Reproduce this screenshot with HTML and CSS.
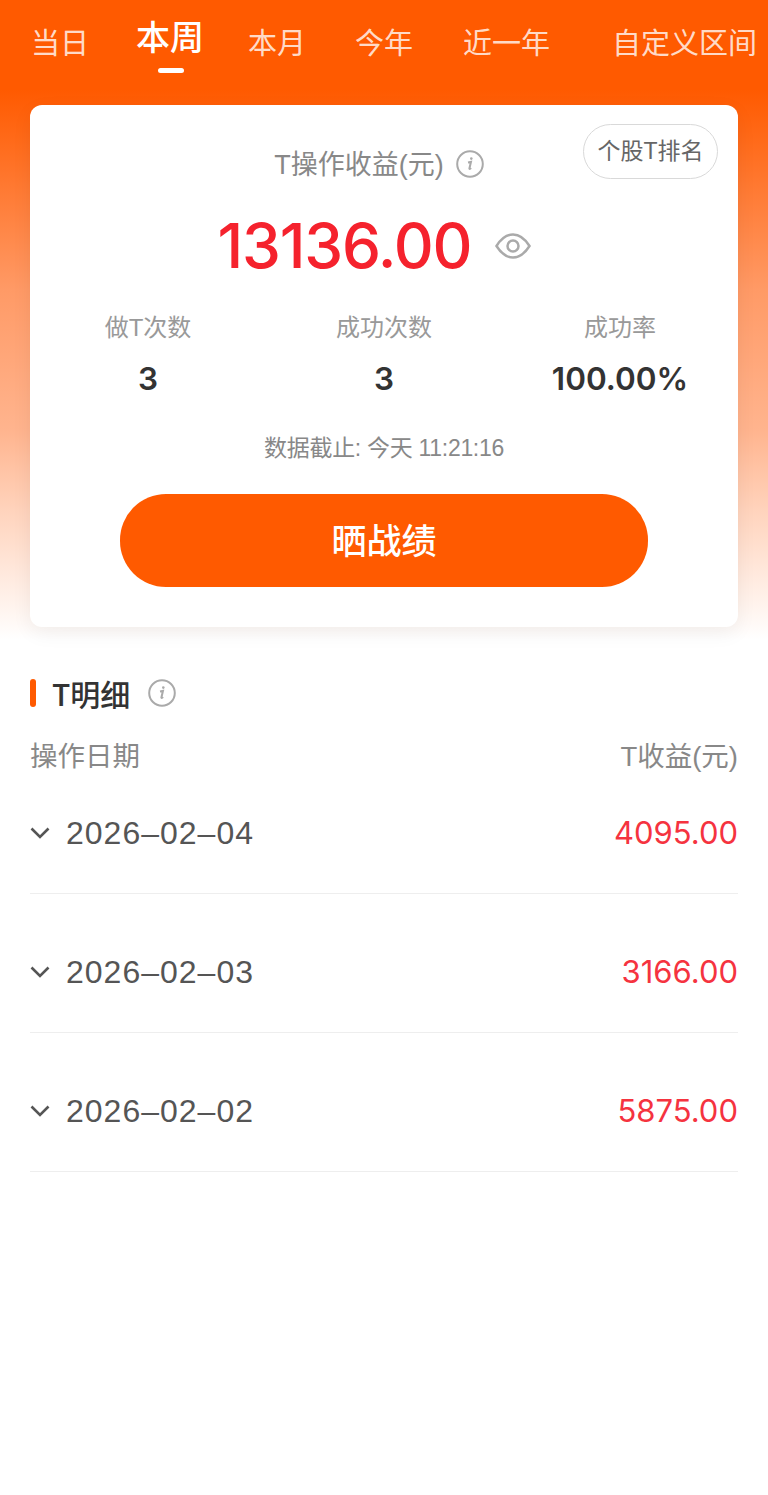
FILE: index.html
```html
<!DOCTYPE html>
<html lang="en">
<head>
    <meta charset="UTF-8">
    <meta name="viewport" content="width=device-width, initial-scale=1.0">
    <title>T操作收益</title>
    <link rel="stylesheet" href="styles.css">
</head>
<body>

    <section class="top">
      <nav class="tabs">
        <a class="tab">当日</a>
        <a class="tab active">本周</a>
        <a class="tab">本月</a>
        <a class="tab">今年</a>
        <a class="tab">近一年</a>
        <a class="tab">自定义区间</a>
      </nav>

      <div class="card">
        <a class="rank-btn">个股T排名</a>

        <div class="card-title">
          <span class="card-title-text">T操作收益(元)</span>
          <svg class="info-icon" viewBox="0 0 28 28"><circle cx="14" cy="14" r="12.8"/><path d="M12 12.4l3-.6-1.6 6.6c-.1.7.5.8 1.7-.3"/><circle class="dot" cx="15.3" cy="8.6" r="1.3"/></svg>
        </div>

        <div class="amount-row">
          <span class="amount">13136.00</span>
          <svg class="eye-icon" viewBox="0 0 36 26"><path d="M1.5 13C6.500 5 11.500 1.500 18 1.500S29.500 5 34.500 13C29.500 21 24.500 24.500 18 24.500S6.500 21 1.500 13z"/><circle cx="18" cy="13" r="5.500"/></svg>
        </div>

        <div class="stats">
          <div class="stat">
            <div class="stat-label">做T次数</div>
            <div class="stat-value">3</div>
          </div>
          <div class="stat">
            <div class="stat-label">成功次数</div>
            <div class="stat-value">3</div>
          </div>
          <div class="stat">
            <div class="stat-label">成功率</div>
            <div class="stat-value">100.00%</div>
          </div>
        </div>

        <div class="updated">数据截止: 今天 11:21:16</div>
        <button class="share-btn">晒战绩</button>
      </div>
    </section>

    <section class="detail">
      <div class="detail-title">
        <i class="title-bar"></i>
        <h2>T明细</h2>
        <svg class="info-icon" viewBox="0 0 28 28"><circle cx="14" cy="14" r="12.8"/><path d="M12 12.4l3-.6-1.6 6.6c-.1.7.5.8 1.7-.3"/><circle class="dot" cx="15.3" cy="8.6" r="1.3"/></svg>
      </div>

      <div class="detail-head">
        <span>操作日期</span>
        <span>T收益(元)</span>
      </div>

      <div class="rows">
        <div class="row">
          <div class="row-date">
            <svg class="chevron" viewBox="0 0 20 12"><path d="M1.5 1.5L10 10l8.500-8.500"/></svg>
            <span>2026–02–04</span>
          </div>
          <span class="row-value">4095.00</span>
        </div>
        <div class="row">
          <div class="row-date">
            <svg class="chevron" viewBox="0 0 20 12"><path d="M1.5 1.5L10 10l8.500-8.500"/></svg>
            <span>2026–02–03</span>
          </div>
          <span class="row-value">3166.00</span>
        </div>
        <div class="row">
          <div class="row-date">
            <svg class="chevron" viewBox="0 0 20 12"><path d="M1.5 1.5L10 10l8.500-8.500"/></svg>
            <span>2026–02–02</span>
          </div>
          <span class="row-value">5875.00</span>
        </div>
      </div>
    </section>

</body>
</html>
```

FILE: styles.css
```css
* {
    box-sizing: border-box;
}

body {
    margin: 0;
    min-height: 100vh;
    background: #fff;
    color: #333;
    font-family: "Liberation Sans", "Noto Sans CJK SC", sans-serif;
}

.top {
    padding: 0 30px 13px;
    background: linear-gradient(#ff5a00 0, #ff5a00 90px, #ff9a66 290px, #ffb48e 430px, #ffd3bc 510px, #fff 640px);
}

.tabs {
    display: flex;
    align-items: flex-start;
    height: 105px;
    margin: 0 -30px;
    padding: 24px 0 0 31px;
    white-space: nowrap;
}

.tab {
    position: relative;
    margin-right: 49px;
    color: rgba(255, 255, 255, 0.8);
    font-size: 29px;
    line-height: 40px;
}

.tab:first-child {
    margin-right: 47px;
}

.tab.active {
    margin-top: -6px;
    margin-right: 44px;
    color: #fff;
    font-size: 34px;
    font-weight: 500;
}

.tab.active::after {
    content: "";
    position: absolute;
    left: 22px;
    top: 50px;
    width: 26px;
    height: 5px;
    border-radius: 3px;
    background: #fff;
}

.tab:nth-child(5) {
    margin-left: 1px;
    margin-right: 62px;
}

.tab:last-child {
    margin-right: 0;
}

.card {
    position: relative;
    display: flex;
    flex-direction: column;
    align-items: center;
    height: 522px;
    padding-top: 41px;
    background: #fff;
    border-radius: 12px;
    box-shadow: 0 6px 20px rgba(0, 0, 0, 0.06);
}

.rank-btn {
    position: absolute;
    top: 19px;
    right: 20px;
    width: 135px;
    height: 55px;
    border: 1.5px solid #d9d9d9;
    border-radius: 28px;
    color: #666;
    font-size: 23px;
    line-height: 52px;
    text-align: center;
}

.card-title {
    display: flex;
    align-items: center;
    gap: 12px;
    height: 36px;
    padding-right: 10px;
    color: #888;
    font-size: 27px;
}

.card-title-text {
    margin-top: -4px;
}

.info-icon {
    width: 28px;
    height: 28px;
    fill: none;
    stroke: #aaa;
    stroke-width: 2;
}

.info-icon .dot {
    fill: #aaa;
    stroke: none;
}

.amount-row {
    display: flex;
    align-items: center;
    gap: 24px;
    height: 64px;
    margin-top: 32px;
    margin-bottom: -1px;
    padding-right: 19px;
}

.amount {
    color: #f5222d;
    font-family: Inter, "Liberation Sans", sans-serif;
    font-size: 62px;
    font-weight: 500;
    line-height: 64px;
    letter-spacing: -1.2px;
}

.eye-icon {
    width: 36px;
    height: 26px;
    fill: none;
    stroke: #aaa;
    stroke-width: 2.5;
}

.stats {
    display: grid;
    grid-template-columns: repeat(3, 1fr);
    width: 100%;
    margin-top: 34px;
    text-align: center;
}

.stat-label {
    height: 34px;
    color: #999;
    font-size: 24px;
    line-height: 34px;
}

.stat-value {
    margin-top: 14px;
    color: #333;
    font-family: Inter, "Liberation Sans", sans-serif;
    font-size: 31.5px;
    font-weight: 600;
    line-height: 40px;
}

.updated {
    margin-top: 33px;
    color: #888;
    font-size: 23px;
    line-height: 32px;
    letter-spacing: -0.3px;
}

.share-btn {
    width: 528px;
    height: 93px;
    margin-top: 30px;
    padding: 0 0 4px;
    background: #ff5a00;
    border: none;
    border-radius: 46px;
    color: #fff;
    font-family: inherit;
    font-size: 35px;
    font-weight: 500;
}

.detail {
    padding: 33px 30px 0;
}

.detail-title {
    display: flex;
    align-items: center;
    height: 40px;
}

.title-bar {
    width: 6px;
    height: 28px;
    margin-right: 16px;
    border-radius: 3px;
    background: #ff5a00;
}

.detail-title h2 {
    margin: 0 18px 0 0;
    color: #333;
    font-family: "Noto Sans CJK SC", sans-serif;
    font-size: 30px;
    font-weight: 500;
}

.detail-head {
    display: flex;
    justify-content: space-between;
    margin-top: 26px;
    color: #888;
    font-size: 27.5px;
    line-height: 36px;
}

.rows {
    display: flex;
    flex-direction: column;
    gap: 62px;
    padding-top: 42px;
}

.row {
    display: flex;
    justify-content: space-between;
    height: 77px;
    border-bottom: 1px solid #eee;
    font-size: 32px;
    line-height: 32px;
}

.row-date {
    display: flex;
    align-items: center;
    gap: 16px;
    height: 32px;
    color: #555;
    letter-spacing: 1px;
}

.chevron {
    width: 20px;
    height: 12px;
    fill: none;
    stroke: #555;
    stroke-width: 2.6;
}

.row-value {
    color: #f5333f;
    font-family: Inter, "Liberation Sans", sans-serif;
    font-size: 31px;
}
```
